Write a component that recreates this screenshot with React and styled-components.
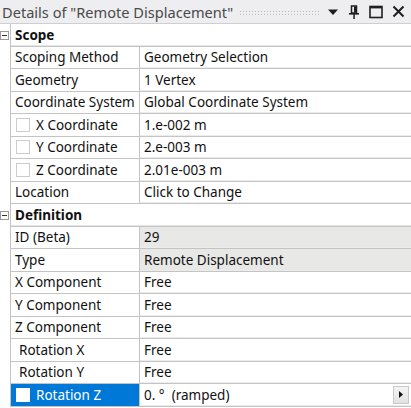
import React from "react";
import styled, { createGlobalStyle } from "styled-components";

const GlobalStyle = createGlobalStyle`
  html, body {
    margin: 0;
    padding: 0;
    background: #ffffff;
  }
  body {
    font-family: "Noto Sans", "Open Sans", sans-serif;
  }
`;

const rows = [
  { type: "section", label: "Scope" },
  { label: "Scoping Method", value: "Geometry Selection" },
  { label: "Geometry", value: "1 Vertex" },
  { label: "Coordinate System", value: "Global Coordinate System" },
  { label: "X Coordinate", value: "1.e-002 m", check: true },
  { label: "Y Coordinate", value: "2.e-003 m", check: true },
  { label: "Z Coordinate", value: "2.01e-003 m", check: true },
  { label: "Location", value: "Click to Change" },
  { type: "section", label: "Definition" },
  { label: "ID (Beta)", value: "29", readOnly: true },
  { label: "Type", value: "Remote Displacement", readOnly: true },
  { label: "X Component", value: "Free" },
  { label: "Y Component", value: "Free" },
  { label: "Z Component", value: "Free" },
  { label: "Rotation X", value: "Free", indent: true },
  { label: "Rotation Y", value: "Free", indent: true },
  { label: "Rotation Z", value: "0. °  (ramped)", check: true, selected: true, dropdown: true },
];

const Panel = styled.div`
  width: 411px;
  height: 408px;
  overflow: hidden;
  background: #ffffff;
  display: flex;
  flex-direction: column;
`;

const TitleBar = styled.div`
  height: 23px;
  flex: none;
  display: flex;
  align-items: center;
  background: #eeeef0;
  border-bottom: 1px solid #cfcfd3;
  padding: 0 6px 0 2px;
  gap: 6px;
`;

const Title = styled.span`
  font-size: 14.6px;
  color: #4a4a4a;
  white-space: nowrap;
`;

const Grip = styled.div`
  flex: 1;
  height: 5px;
  margin-top: 1px;
  background-image: radial-gradient(circle, #b9b9bf 0.8px, transparent 1px);
  background-size: 3px 3px;
`;

const Icons = styled.div`
  display: flex;
  align-items: center;
  gap: 9px;
`;

const Table = styled.div`
  display: grid;
  grid-template-columns: 10px 130px 1fr;
  grid-auto-rows: 22.5px;
`;

const Gutter = styled.div`
  display: flex;
  align-items: center;
  justify-content: center;
  background: #ffffff;
`;

const Minus = styled.div`
  width: 7px;
  height: 7px;
  border: 1px solid #9a9a9a;
  position: relative;
  margin-left: -1px;
  &::after {
    content: "";
    position: absolute;
    left: 1px;
    right: 1px;
    top: 3px;
    height: 1px;
    background: #333;
  }
`;

const SectionCell = styled.div`
  grid-column: 2 / 4;
  display: flex;
  align-items: center;
  padding-left: 4px;
  font-size: 13.5px;
  font-weight: 700;
  color: #111;
  border-left: 1px solid #c4c4c4;
  border-bottom: 1px solid #c4c4c4;
  box-shadow: inset 0 -1px 0 #e6e6e6;
`;

const LabelCell = styled.div`
  display: flex;
  align-items: center;
  gap: 6px;
  padding-left: ${(p) => (p.$indent ? "8px" : "4px")};
  font-size: 13.5px;
  white-space: nowrap;
  overflow: hidden;
  color: ${(p) => (p.$selected ? "#ffffff" : "#111")};
  background: ${(p) => (p.$selected ? "#0078d7" : "#ffffff")};
  border-left: 1px solid #c4c4c4;
  border-right: 1px solid #c4c4c4;
  border-bottom: 1px solid #c4c4c4;
`;

const ValueCell = styled.div`
  display: flex;
  align-items: center;
  padding-left: 4px;
  font-size: 13.5px;
  white-space: pre;
  color: #111;
  background: ${(p) => (p.$readOnly ? "#e8e8e6" : "#ffffff")};
  border-bottom: 1px solid #c4c4c4;
  box-shadow: inset 0 -1px 0 #ececec;
`;

const Check = styled.span`
  width: 14px;
  height: 14px;
  flex: none;
  box-sizing: border-box;
  background: #ffffff;
  border: 1px solid ${(p) => (p.$selected ? "#ffffff" : "#cccccc")};
  margin-left: 1px;
`;

const ValueText = styled.span`
  flex: 1;
`;

const DropButton = styled.div`
  width: 16px;
  height: 18px;
  margin-right: 2px;
  display: flex;
  align-items: center;
  justify-content: center;
  background: linear-gradient(#f4f4f4, #e2e2e2);
  border: 1px solid #c9c9c9;
  box-sizing: border-box;
`;

const PinIcon = () => (
  <svg width="12" height="14" viewBox="0 0 12 14">
    <rect x="3.5" y="1" width="5" height="7" fill="none" stroke="#1e1e1e" strokeWidth="1.5" />
    <rect x="6" y="1.5" width="2.2" height="6" fill="#1e1e1e" />
    <rect x="1" y="8" width="10" height="1.6" fill="#1e1e1e" />
    <rect x="5.3" y="9" width="1.5" height="5" fill="#1e1e1e" />
  </svg>
);

const App = () => (
  <>
    <GlobalStyle />
    <Panel>
      <TitleBar>
        <Title>Details of "Remote Displacement"</Title>
        <Grip />
        <Icons>
          <svg width="12" height="8" viewBox="0 0 12 8">
            <path d="M1 1.5 H11 L6 7 Z" fill="#1e1e1e" />
          </svg>
          <PinIcon />
          <svg width="14" height="14" viewBox="0 0 14 14">
            <rect x="1" y="1.5" width="12" height="11" fill="none" stroke="#1e1e1e" strokeWidth="1.6" />
            <rect x="1" y="1" width="12" height="2.4" fill="#1e1e1e" />
          </svg>
          <svg width="13" height="13" viewBox="0 0 13 13">
            <path d="M1.5 1.5 L11.5 11.5 M11.5 1.5 L1.5 11.5" stroke="#1e1e1e" strokeWidth="2" />
          </svg>
        </Icons>
      </TitleBar>
      <Table>
        {rows.map((r, i) =>
          r.type === "section" ? (
            <React.Fragment key={i}>
              <Gutter>
                <Minus />
              </Gutter>
              <SectionCell>{r.label}</SectionCell>
            </React.Fragment>
          ) : (
            <React.Fragment key={i}>
              <Gutter />
              <LabelCell $indent={r.indent} $selected={r.selected}>
                {r.check && <Check $selected={r.selected} />}
                {r.label}
              </LabelCell>
              <ValueCell $readOnly={r.readOnly}>
                <ValueText>{r.value}</ValueText>
                {r.dropdown && (
                  <DropButton>
                    <svg width="4" height="7" viewBox="0 0 4 7">
                      <path d="M0 0 L4 3.5 L0 7 Z" fill="#111" />
                    </svg>
                  </DropButton>
                )}
              </ValueCell>
            </React.Fragment>
          )
        )}
      </Table>
    </Panel>
  </>
);

export default App;
